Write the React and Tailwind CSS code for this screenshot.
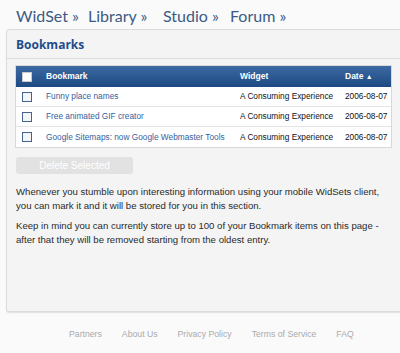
import React from "react";

const rows = [
  { name: "Funny place names" },
  { name: "Free animated GIF creator" },
  { name: "Google Sitemaps: now Google Webmaster Tools" },
];

function Box({ header }) {
  return (
    <span
      className={
        header
          ? "block w-[10px] h-[10px] border border-[#c8c8c8] bg-white"
          : "block w-[10px] h-[10px] border border-[#46638f] bg-[#f3f5f8]"
      }
    />
  );
}

export default function App() {
  return (
    <div className="w-[400px] h-[353px] bg-[#fafafa] overflow-hidden font-['Liberation_Sans',sans-serif]">
      <nav className="flex items-end h-[24px] pl-[16px] text-[16px] leading-none text-[#3d5a84] font-['Lato',sans-serif] whitespace-nowrap">
        <span className="w-[72px]">WidSet »</span>
        <span className="w-[75px]">Library »</span>
        <span className="w-[67px]">Studio »</span>
        <span>Forum »</span>
      </nav>
      <div className="ml-[6px] mt-[5px] w-[400px] h-[283px] border border-[#dcdcdc] rounded-[3px] bg-[#f4f4f4] shadow-[0_1px_1px_#e0e0e0]">
        <div className="h-[29px] border-b border-[#dedede] pl-[9px] pt-[9px] text-[12px] font-bold text-[#1f4d8c] leading-none font-['Open_Sans',sans-serif]">
          Bookmarks
        </div>
        <div className="mx-[8px] mt-[6px] w-[377px] border border-[#d8d8d8] bg-white">
          <div className="flex items-center h-[21px] bg-gradient-to-b from-[#3d69a2] to-[#1e4a84] text-white text-[8.5px] font-bold">
            <span className="w-[30px] pl-[6px]"><Box header /></span>
            <span className="w-[194px]">Bookmark</span>
            <span className="w-[105px]">Widget</span>
            <span>Date <span className="text-[7px]">▲</span></span>
          </div>
          {rows.map((r, i) => (
            <div
              key={i}
              className={
                "flex items-center h-[20px] text-[8.3px] whitespace-nowrap " +
                (i < rows.length - 1 ? "border-b border-[#e4e4e4]" : "")
              }
            >
              <span className="w-[30px] pl-[6px]"><Box /></span>
              <span className="w-[194px] text-[#3561a0]">{r.name}</span>
              <span className="w-[105px] text-[#111]">A Consuming Experience</span>
              <span className="text-[#111]">2006-08-07</span>
            </div>
          ))}
        </div>
        <div className="ml-[9px] mt-[9px] w-[117px] h-[17px] rounded-[3px] bg-[#e2e2e2] text-white text-[10px] flex items-center justify-center">
          Delete Selected
        </div>
        <div className="ml-[9px] mt-[11px] w-[376px] text-[9.6px] leading-[14px] text-[#2a2a2a]">
          <p>Whenever you stumble upon interesting information using your mobile WidSets client, you can mark it and it will be stored for you in this section.</p>
          <p className="mt-[6px]">Keep in mind you can currently store up to 100 of your Bookmark items on this page - after that they will be removed starting from the oldest entry.</p>
        </div>
      </div>
      <footer className="flex gap-[20px] pl-[69px] mt-[18px] text-[8.7px] text-[#aaaaaa] leading-none whitespace-nowrap">
        <span>Partners</span>
        <span>About Us</span>
        <span>Privacy Policy</span>
        <span>Terms of Service</span>
        <span>FAQ</span>
      </footer>
    </div>
  );
}
